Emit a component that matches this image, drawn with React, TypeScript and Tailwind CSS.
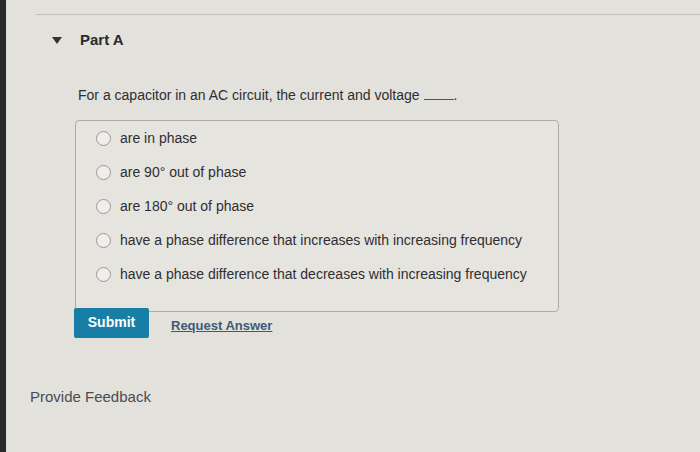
import { useState } from 'react'

const options = [
  'are in phase',
  'are 90° out of phase',
  'are 180° out of phase',
  'have a phase difference that increases with increasing frequency',
  'have a phase difference that decreases with increasing frequency',
]

export default function App() {
  const [picked, setPicked] = useState<number | null>(null)

  return (
    <div
      className="flex h-[452px] w-[700px] overflow-hidden bg-[#e3e1dc] text-[#2a2a2e]"
      style={{ fontFamily: '"Liberation Sans", Arial, sans-serif' }}
    >
      {/* bezel */}
      <div className="w-[6px] shrink-0 bg-[#2a2a2c]" />

      <div className="flex flex-1 flex-col">
        {/* top rule */}
        <div className="ml-[30px] mt-[14px] h-px bg-[#c4c2bd]" />

        {/* Part header */}
        <div className="mt-[14px] flex items-center pl-[46px]">
          <span className="mr-[18px] h-0 w-0 border-x-[5px] border-t-[7px] border-x-transparent border-t-[#333]" />
          <h2 className="text-[15px] font-bold text-[#2a2a2e]">Part A</h2>
        </div>

        {/* question */}
        <p className="mt-[33px] pl-[72px] text-[14px] text-[#2e2e32]">
          For a capacitor in an AC circuit, the current and voltage{' '}
          <span className="inline-block w-[30px] border-b border-[#555] align-baseline" />.
        </p>

        {/* choices */}
        <div className="ml-[69px] mt-[14px] w-[484px] rounded-[4px] border border-[#aeaca8] bg-[#e6e4df] pb-[19px] pt-px">
          {options.map((o, i) => (
            <label key={i} className="flex h-[34px] cursor-pointer items-center pl-[20px]">
              <span
                onClick={() => setPicked(i)}
                className="mr-[9px] flex h-[15px] w-[15px] items-center justify-center rounded-full border border-[#999] bg-[#efeeea]"
              >
                {picked === i && <span className="h-[6px] w-[6px] rounded-full bg-[#1b7ea6]" />}
              </span>
              <span className="text-[14px] text-[#2e2e32]">{o}</span>
            </label>
          ))}
        </div>

        {/* actions */}
        <div className="mt-[-4px] flex items-center pl-[68px]">
          <button className="h-[30px] w-[75px] rounded-[2px] bg-[#177ea6] text-[14px] font-bold text-white">
            Submit
          </button>
          <a href="#" className="ml-[22px] mt-[6px] text-[13px] font-bold text-[#3c5a78] underline">
            Request Answer
          </a>
        </div>

        <div className="mt-[48px] pl-[24px] text-[15px] text-[#4b4b50]">Provide Feedback</div>
      </div>
    </div>
  )
}
